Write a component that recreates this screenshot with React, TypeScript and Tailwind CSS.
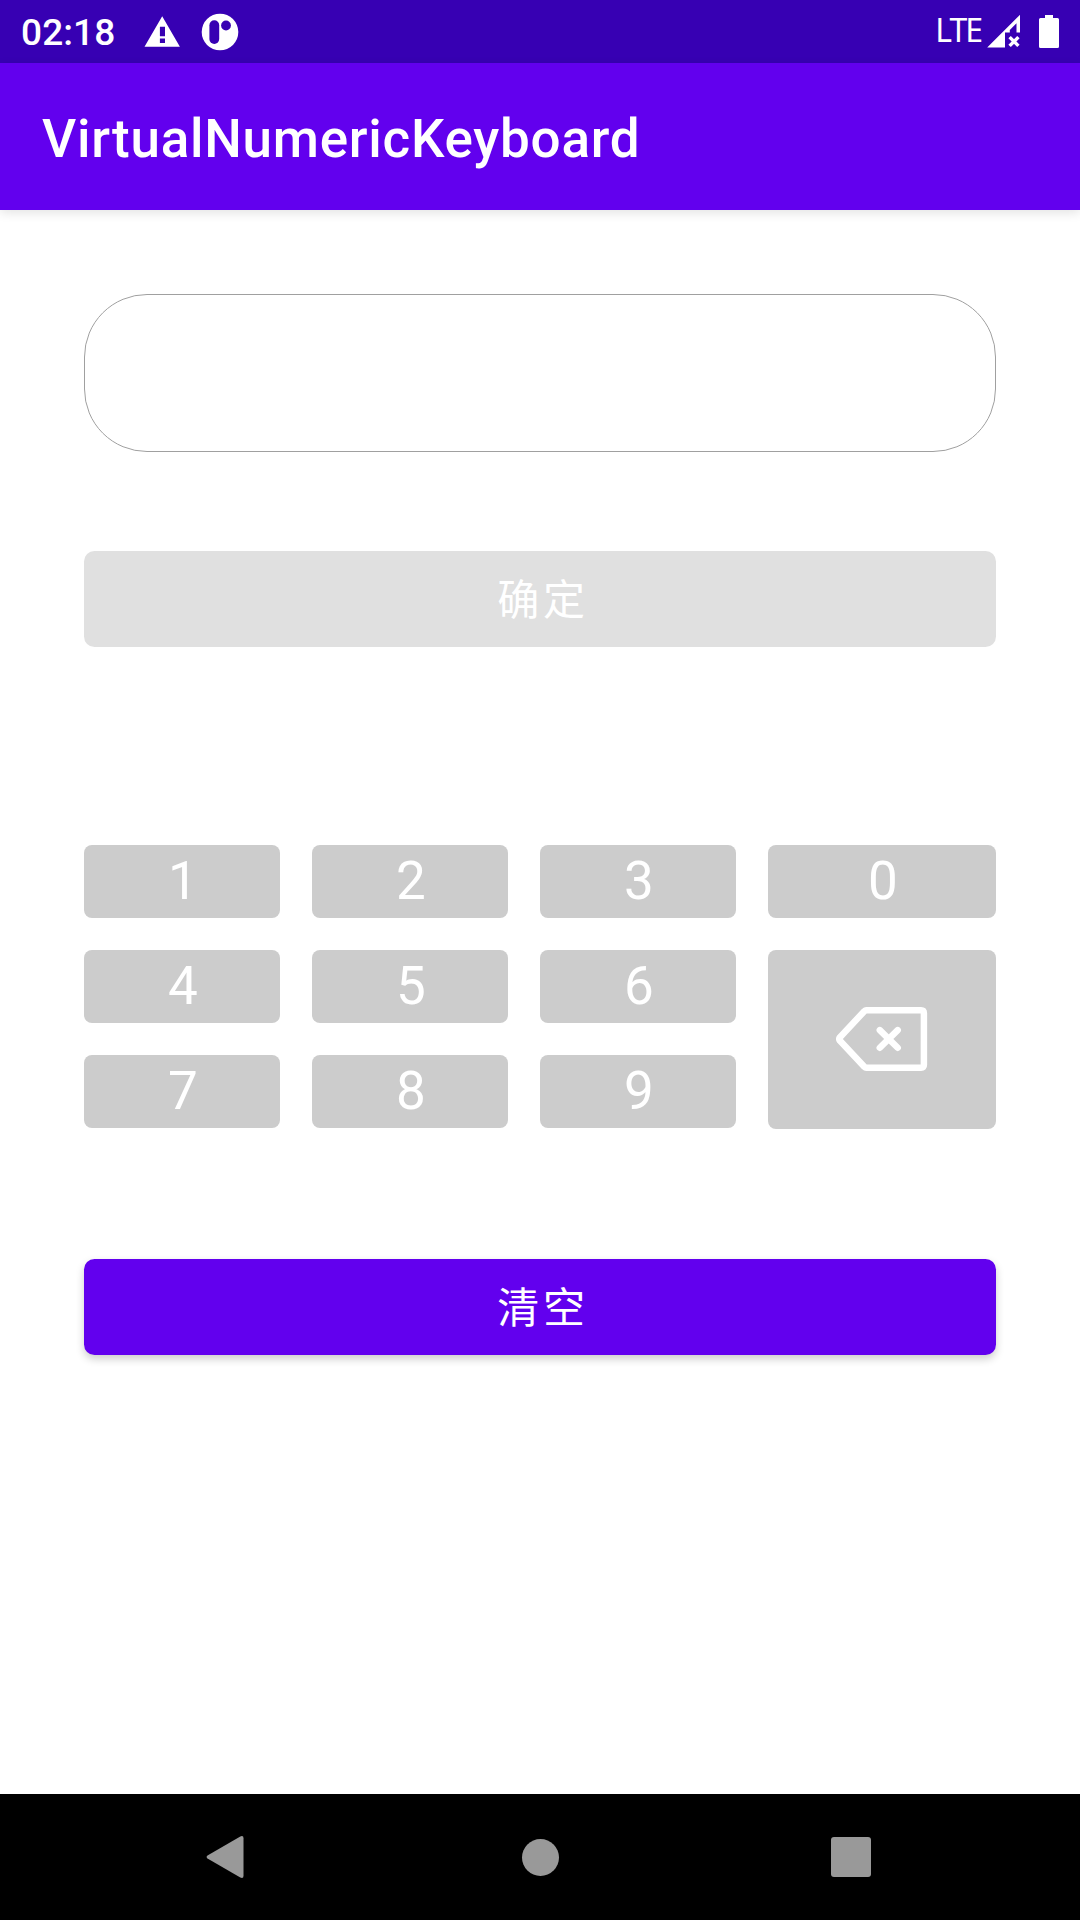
import React from "react";

const DIGIT_KEYS = ["1", "2", "3", "0", "4", "5", "6", null, "7", "8", "9"];

function WarningIcon() {
  return (
    <svg width="36" height="32" viewBox="144 15.5 36 32" fill="#fff">
      <path
        fillRule="evenodd"
        d="M162.2 15.8 L179.9 46.2 H144.5 Z M159.9 26.2 V35.7 H165 V26.2 Z M159.9 38 V42.5 H165 V38 Z"
      />
    </svg>
  );
}

function AppIcon() {
  return (
    <svg width="38" height="38" viewBox="201 12.5 38 38">
      <circle cx="220" cy="31.5" r="18.3" fill="#fff" />
      <rect x="209.4" y="19.8" width="9.8" height="23.6" rx="4.9" fill="#3700b3" />
      <circle cx="226" cy="25" r="4.9" fill="#3700b3" />
    </svg>
  );
}

function SignalIcon() {
  return (
    <svg width="34" height="34" viewBox="987 14.5 34 34">
      <path fill="#fff" d="M987.2 47 L1020 14.3 V32 H1016.5 V22.7 L1009.8 29.4 V32 H1005 V47 Z" />
      <path d="M1009.6 36.6 L1018.4 45.4 M1018.4 36.6 L1009.6 45.4" stroke="#fff" strokeWidth="3.4" />
    </svg>
  );
}

function BatteryIcon() {
  return (
    <svg width="20" height="34" viewBox="0 0.5 20 34" fill="#fff">
      <path d="M6 0.5 H14 V3.5 H18.5 Q20 3.5 20 5 V32 Q20 33.6 18.5 33.6 H1.5 Q0 33.6 0 32 V5 Q0 3.5 1.5 3.5 H6 Z" />
    </svg>
  );
}

function BackspaceIcon() {
  return (
    <svg
      width="92"
      height="65"
      viewBox="836 1007 92 65"
      fill="none"
      stroke="#fff"
      strokeWidth="6.5"
      strokeLinecap="round"
      strokeLinejoin="round"
    >
      <path d="M866.3 1010.3 H921 Q923.9 1010.3 923.9 1013.2 V1064.8 Q923.9 1067.7 921 1067.7 H866.3 Q865.2 1067.7 864.3 1066.8 L840 1040.8 Q838.5 1039 840 1037.2 L864.3 1011.2 Q865.2 1010.3 866.3 1010.3 Z" />
      <path d="M879.8 1030.1 L897.7 1047.8 M897.7 1030.1 L879.8 1047.8" />
    </svg>
  );
}

export default function App() {
  return (
    <div className="flex h-[1920px] w-[1080px] flex-col overflow-hidden bg-white font-['Roboto','Noto_Sans_CJK_SC',sans-serif] text-white">
      <div className="flex h-[63px] shrink-0 items-center bg-[#3700b3] pl-[21px]">
        <span className="w-[123px] pt-[3px] text-[37px] leading-[42px] font-medium tracking-[0.1px]">02:18</span>
        <WarningIcon />
        <div className="ml-[21px]">
          <AppIcon />
        </div>
        <span className="mr-[6px] ml-auto pb-[3px] font-['Noto_Sans',sans-serif] text-[32px] leading-[40px] tracking-[-2px]">
          LTE
        </span>
        <SignalIcon />
        <div className="mr-[21px] ml-[18px]">
          <BatteryIcon />
        </div>
      </div>

      <header className="flex h-[147px] shrink-0 items-center bg-[#6200ee] pt-[5px] pl-[42px] shadow-[0_3px_10px_rgba(0,0,0,0.11)]">
        <h1 className="text-[53px] leading-[62px] font-medium tracking-[0.75px]">VirtualNumericKeyboard</h1>
      </header>

      <main className="flex grow flex-col px-[84px] pt-[84px]">
        <div className="h-[158px] rounded-[63px] border border-[#a0a0a0]" />

        <button className="mt-[99px] h-[96px] rounded-[10.5px] bg-[#e0e0e0] pt-[3px] pl-[6px] text-[42px] leading-[50px] tracking-[0.0893em]">
          确定
        </button>

        <div className="mt-[198px] grid grid-cols-[196px_196px_196px_228px] grid-rows-[73px_73px_74px] gap-8">
          {DIGIT_KEYS.map((key) =>
            key === null ? (
              <button key="backspace" className="row-span-2 flex items-center justify-center rounded-lg bg-[#cccccc]">
                <BackspaceIcon />
              </button>
            ) : (
              <button
                key={key}
                className="flex h-[73px] items-center justify-center rounded-lg bg-[#cccccc] pb-[2px] pl-[2px] text-[53px] leading-[62px]"
              >
                {key}
              </button>
            ),
          )}
        </div>

        <button className="mt-[130px] h-[96px] rounded-[10.5px] bg-[#6200ee] pt-[3px] pl-[6px] text-[42px] leading-[50px] tracking-[0.0893em] shadow-[0_4px_8px_rgba(0,0,0,0.2)]">
          清空
        </button>
      </main>

      <nav className="flex h-[126px] shrink-0 items-center justify-between bg-black pr-[209px] pl-[206px]">
        <svg width="38" height="44" viewBox="0 0 38 44" fill="#999">
          <path d="M1.5 20.5 L34.3 1.4 Q37.5 0 37.5 3.2 V40.8 Q37.5 44 34.3 42.6 L1.5 23.5 Q-0.3 22 1.5 20.5 Z" />
        </svg>
        <div className="ml-[5px] size-[37px] rounded-full bg-[#999]" />
        <div className="size-[40px] rounded-[3px] bg-[#999]" />
      </nav>
    </div>
  );
}
